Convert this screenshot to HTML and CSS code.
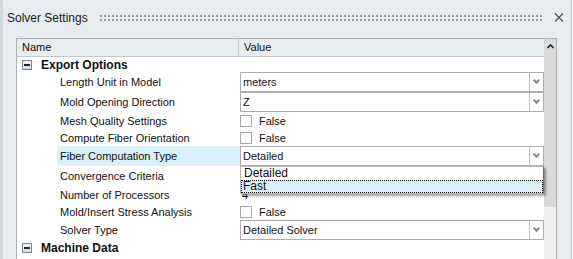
FILE: index.html
```html
<!DOCTYPE html>
<html lang="en">

<head>
    <meta charset="UTF-8">
    <title>Solver Settings</title>
    <link rel="stylesheet" href="styles.css">
</head>

<body>
    <div class="panel">

        <div class="titlebar">
            <span class="title">Solver Settings</span>
            <span class="grip"></span>
            <svg class="close" width="10" height="9" viewBox="0 0 10 9">
                <path d="M1 0.5 L9 8.5 M9 0.5 L1 8.5" stroke="#4a4a4a" stroke-width="1.1" fill="none" />
            </svg>
        </div>

        <div class="grid">
            <div class="table">
                <div class="head">
                    <div class="name">Name</div>
                    <div class="value">Value</div>
                </div>

                <div class="row group">
                    <div class="name"><span class="expander"></span>Export Options</div>
                </div>
                <div class="row combo">
                    <div class="name">Length Unit in Model</div>
                    <div class="value"><div class="box">meters<span class="drop"></span></div></div>
                </div>
                <div class="row combo">
                    <div class="name">Mold Opening Direction</div>
                    <div class="value"><div class="box">Z<span class="drop"></span></div></div>
                </div>
                <div class="row check">
                    <div class="name">Mesh Quality Settings</div>
                    <div class="value"><span class="checkbox"></span>False</div>
                </div>
                <div class="row check">
                    <div class="name">Compute Fiber Orientation</div>
                    <div class="value"><span class="checkbox"></span>False</div>
                </div>
                <div class="row combo selected">
                    <div class="name">Fiber Computation Type</div>
                    <div class="value">
                        <div class="box">Detailed<span class="drop"></span></div>
                        <ul class="list">
                            <li>Detailed</li>
                            <li class="current">Fast</li>
                        </ul>
                    </div>
                </div>
                <div class="row combo">
                    <div class="name">Convergence Criteria</div>
                    <div class="value"></div>
                </div>
                <div class="row check">
                    <div class="name">Number of Processors</div>
                    <div class="value"><span class="plain">4</span></div>
                </div>
                <div class="row check">
                    <div class="name">Mold/Insert Stress Analysis</div>
                    <div class="value"><span class="checkbox"></span>False</div>
                </div>
                <div class="row combo">
                    <div class="name">Solver Type</div>
                    <div class="value"><div class="box">Detailed Solver<span class="drop"></span></div></div>
                </div>
                <div class="row group">
                    <div class="name"><span class="expander"></span>Machine Data</div>
                </div>
                <div class="row check">
                    <div class="name">Shot Size</div>
                </div>
            </div>

            <div class="scrollbar">
                <div class="thumb">
                    <svg class="up" width="7" height="5" viewBox="0 0 7 5">
                        <path d="M0.5 4 L3.5 1 L6.5 4" stroke="#222" stroke-width="1.6" fill="none" />
                    </svg>
                </div>
            </div>
        </div>

    </div>
</body>

</html>
```

FILE: styles.css
```css
* {
    box-sizing: border-box;
}

body {
    margin: 0;
    font-family: "Liberation Sans", Arial, sans-serif;
    font-size: 11px;
    color: #111;
}

.panel {
    width: 573px;
    height: 259px;
    overflow: hidden;
    background: #e6ecef;
    border-left: 3px solid #d3d8db;
    padding-left: 13px;
    padding-right: 16px;
    position: relative;
}

.panel::after {
    content: "";
    position: absolute;
    top: 0;
    right: 1px;
    width: 1px;
    height: 100%;
    background: #c4cacd;
}

.titlebar {
    height: 38px;
    display: flex;
    align-items: center;
    margin-left: -9px;
    margin-right: -16px;
    padding-bottom: 3px;
}

.title {
    font-size: 12px;
    color: #1a1a1a;
    width: 93px;
}

.grip {
    width: 444px;
    height: 6px;
    background-image:
        linear-gradient(90deg, #9a9a9a 2px, transparent 2px),
        linear-gradient(90deg, #9a9a9a 2px, transparent 2px);
    background-size: 4px 2px, 4px 2px;
    background-position: 0 0, 0 4px;
    background-repeat: repeat-x;
}

.close {
    margin-left: 10px;
}

.grid {
    display: flex;
    border: 1px solid #a8afb3;
    border-bottom: none;
    height: 221px;
    background: #fff;
}

.table {
    flex: 1;
}

.head {
    display: flex;
    height: 18px;
    background: #e8edf0;
    border-bottom: 1px solid #c3c9cc;
}

.head .name {
    width: 222px;
    padding-left: 5px;
    border-right: 1px solid #c6ccd0;
    line-height: 17px;
}

.head .value {
    padding-left: 5px;
    line-height: 17px;
}

.row {
    display: flex;
    align-items: center;
}

.row .name {
    width: 223px;
    height: 100%;
    display: flex;
    align-items: center;
    padding-left: 43px;
}

.row .value {
    flex: 1;
    height: 100%;
    display: flex;
    align-items: center;
    position: relative;
}

.group {
    height: 15px;
    font-weight: bold;
    font-size: 12px;
}

.group .name {
    padding-left: 5px;
}

.combo {
    height: 20px;
}

.check {
    height: 17px;
}

.selected .name {
    background: linear-gradient(90deg, transparent 40px, #d9eff9 40px);
}

.expander {
    width: 10px;
    height: 10px;
    border: 1px solid #7c8790;
    background: linear-gradient(#f4f6f8, #d4dadf);
    position: relative;
    margin-right: 9px;
}

.expander::after {
    content: "";
    position: absolute;
    left: 1px;
    top: 3px;
    width: 6px;
    height: 2px;
    background: #1d2a33;
}

.box {
    width: 304px;
    height: 20px;
    border: 1px solid #adadad;
    display: flex;
    align-items: center;
    padding-left: 2px;
    position: relative;
    background: #fff;
}

.drop {
    position: absolute;
    right: 0;
    top: 0;
    width: 14px;
    height: 100%;
    border-left: 1px solid #c2c2c2;
}

.drop::after {
    content: "";
    position: absolute;
    left: 4px;
    top: 5px;
    width: 3px;
    height: 3px;
    border-right: 2px solid #8a8a8a;
    border-bottom: 2px solid #8a8a8a;
    transform: rotate(45deg);
}

.checkbox {
    width: 12px;
    height: 12px;
    border: 1px solid #a9a9a9;
    background: #fff;
    margin-right: 7px;
}

.plain {
    padding-left: 2px;
}

.list {
    position: absolute;
    left: 0;
    top: 100%;
    width: 304px;
    margin: 0;
    padding: 0;
    list-style: none;
    background: #fff;
    border: 1px solid #b8b8b8;
    border-right-color: #6e6e6e;
    box-shadow: 2px 2px 2px rgba(0, 0, 0, 0.35);
    z-index: 2;
}

.list li {
    height: 13px;
    line-height: 12px;
    padding-left: 3px;
    font-size: 12px;
}

.list .current {
    background: #d9eff9;
    outline: 1px dotted #000;
    outline-offset: -1px;
    padding-left: 2px;
}

.scrollbar {
    width: 12px;
    background: #f0f0f0;
}

.thumb {
    height: 168px;
    background: #dadada;
    display: flex;
    justify-content: center;
    padding-top: 5px;
}

.up {
    display: block;
}
```
